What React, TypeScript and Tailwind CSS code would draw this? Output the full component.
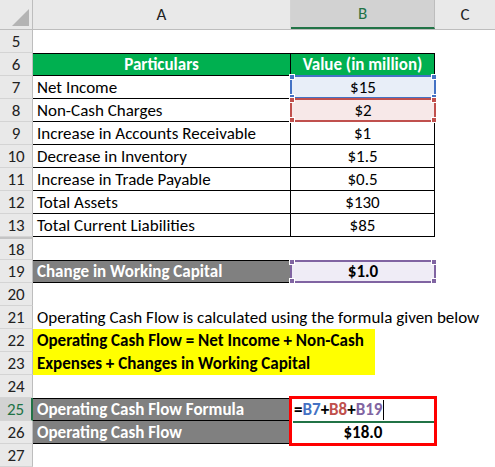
import React from 'react';

const ROW_H = 'h-[23px]';

function RowHead({ n, active }: { n: number | string; active?: boolean }) {
  return (
    <div
      className={`flex items-center justify-center h-[23px] border-b border-[#d4d4d4] ${
        active ? 'bg-[#d2d2d2] text-[#217346] border-r-2 border-r-[#217346]' : 'bg-[#e9e9e9] text-[#222] border-r border-r-[#bdbdbd]'
      }`}
    >
      {n}
    </div>
  );
}

function Handles({ color }: { color: string }) {
  const base = 'absolute w-[6px] h-[6px] border border-white';
  return (
    <>
      <span className={`${base} -left-[3px] -top-[3px]`} style={{ background: color }} />
      <span className={`${base} -right-[3px] -top-[3px]`} style={{ background: color }} />
      <span className={`${base} -left-[3px] -bottom-[3px]`} style={{ background: color }} />
      <span className={`${base} -right-[3px] -bottom-[3px]`} style={{ background: color }} />
    </>
  );
}

const rows: { n: number; label: string; value: string }[] = [
  { n: 9, label: 'Increase in Accounts Receivable', value: '$1' },
  { n: 10, label: 'Decrease in Inventory', value: '$1.5' },
  { n: 11, label: 'Increase in Trade Payable', value: '$0.5' },
  { n: 12, label: 'Total Assets', value: '$130' },
  { n: 13, label: 'Total Current Liabilities', value: '$85' },
];

export default function App() {
  const grid = `grid grid-cols-[33px_258px_144px_60px] ${ROW_H}`;
  return (
    <div
      className="w-[495px] h-[467px] overflow-hidden bg-white text-black text-[17px] leading-none"
      style={{ fontFamily: 'Carlito, Lato, "Open Sans", sans-serif' }}
    >
      {/* column headers */}
      <div className="grid grid-cols-[33px_258px_144px_60px] h-[30px] bg-[#e9e9e9] border-b border-[#bdbdbd]">
        <div className="relative border-r border-[#bdbdbd]">
          <svg className="absolute right-[3px] bottom-[3px]" width="17" height="17" viewBox="0 0 17 17">
            <polygon points="17,0 17,17 0,17" fill="#b4b4b4" />
          </svg>
        </div>
        <div className="flex items-center justify-center border-r border-[#d4d4d4] text-[#222]">A</div>
        <div className="flex items-center justify-center bg-[#d2d2d2] border-r border-[#bdbdbd] border-b-2 border-b-[#217346] text-[#217346]">B</div>
        <div className="flex items-center justify-center text-[#222]">C</div>
      </div>

      {/* row 5 */}
      <div className={grid}>
        <RowHead n={5} />
      </div>

      {/* row 6 header */}
      <div className={grid}>
        <RowHead n={6} />
        <div className="flex items-center justify-center bg-[#00b050] text-white font-bold border-y border-r border-black">Particulars</div>
        <div className="flex items-center justify-center bg-[#00b050] text-white font-bold border-y border-r border-black">Value (in million)</div>
      </div>

      {/* row 7 */}
      <div className={grid}>
        <RowHead n={7} />
        <div className="flex items-center px-[4px] border-b border-r border-black">Net Income</div>
        <div className="relative flex items-center justify-center bg-[#e8eef8]">
          $15
          <div className="absolute -left-[1px] -right-[1px] -top-[1px] bottom-0 border-2 border-[#4472c4]">
            <Handles color="#4472c4" />
          </div>
        </div>
      </div>

      {/* row 8 */}
      <div className={grid}>
        <RowHead n={8} />
        <div className="flex items-center px-[4px] border-b border-r border-black">Non-Cash Charges</div>
        <div className="relative flex items-center justify-center bg-[#f7e8e8]">
          $2
          <div className="absolute -left-[1px] -right-[1px] -top-[1px] bottom-0 border-2 border-[#c0504d]">
            <Handles color="#c0504d" />
          </div>
        </div>
      </div>

      {rows.map((r) => (
        <div key={r.n} className={grid}>
          <RowHead n={r.n} />
          <div className="flex items-center px-[4px] border-b border-r border-black">{r.label}</div>
          <div className="flex items-center justify-center border-b border-r border-black">{r.value}</div>
        </div>
      ))}

      {/* row 18, rows 14-17 hidden */}
      <div className={grid}>
        <div className="flex items-center justify-center bg-[#e9e9e9] border-t-2 border-t-[#c4c4c4] border-b border-[#d4d4d4] border-r border-r-[#bdbdbd] text-[#222]">18</div>
      </div>

      {/* row 19 */}
      <div className={grid}>
        <RowHead n={19} />
        <div className="flex items-center px-[4px] bg-[#808080] text-white font-bold border-y border-black">Change in Working Capital</div>
        <div className="relative flex items-center justify-center bg-[#efecf6] font-bold">
          $1.0
          <div className="absolute -left-[1px] -right-[1px] top-0 bottom-0 border-2 border-[#8064a2]">
            <Handles color="#8064a2" />
          </div>
        </div>
      </div>

      {/* row 20 */}
      <div className={grid}>
        <RowHead n={20} />
      </div>

      {/* row 21 */}
      <div className={grid}>
        <RowHead n={21} />
        <div className="flex items-center px-[4px] whitespace-nowrap">Operating Cash Flow is calculated using the formula given below</div>
      </div>

      {/* rows 22-23 */}
      <div className="grid grid-cols-[33px_342px] h-[46px]">
        <div className="flex flex-col">
          <RowHead n={22} />
          <RowHead n={23} />
        </div>
        <div className="flex flex-col bg-[#ffff00] whitespace-nowrap font-bold">
          <div className="flex items-center h-[23px] px-[4px]">Operating Cash Flow = Net Income + Non-Cash</div>
          <div className="flex items-center h-[23px] px-[4px]">Expenses + Changes in Working Capital</div>
        </div>
      </div>

      {/* row 24 */}
      <div className={grid}>
        <RowHead n={24} />
      </div>

      {/* rows 25-26 */}
      <div className="grid grid-cols-[33px_258px_144px_60px] h-[46px]">
        <div className="flex flex-col">
          <RowHead n={25} active />
          <RowHead n={26} />
        </div>
        <div className="flex flex-col bg-[#808080] text-white font-bold">
          <div className="flex items-center h-[23px] px-[4px] border-y border-black">Operating Cash Flow Formula</div>
          <div className="flex items-center h-[23px] px-[4px] border-b border-black">Operating Cash Flow</div>
        </div>
        <div className="relative flex flex-col">
          <div className="flex items-center h-[23px] px-[3px] font-semibold">
            <span>=</span>
            <span className="text-[#4472c4]">B7</span>
            <span>+</span>
            <span className="text-[#c0504d]">B8</span>
            <span>+</span>
            <span className="text-[#8064a2]">B19</span>
            <span className="ml-[1px] w-px h-[20px] bg-black" />
          </div>
          <div className="flex items-center justify-center h-[23px] font-bold">$18.0</div>
          <div className="absolute left-[2px] right-[1px] top-[23px] h-[2px] bg-[#217346]" />
          <div className="absolute -left-[2px] -right-[2px] -top-[2px] -bottom-[2px] border-[3px] border-[#ff0000]" />
        </div>
      </div>

      {/* row 27 */}
      <div className={grid}>
        <RowHead n={27} />
      </div>
    </div>
  );
}
